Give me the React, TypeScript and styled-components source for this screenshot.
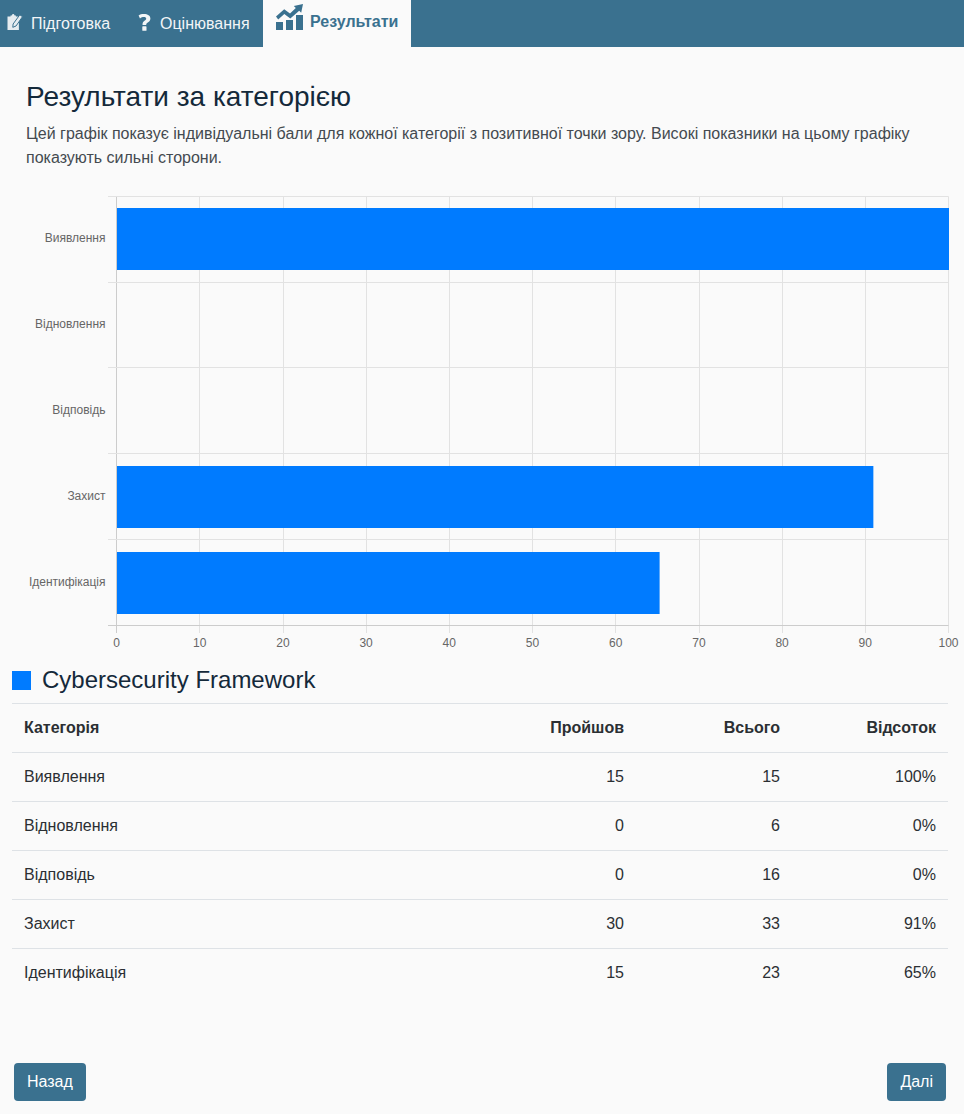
import React from 'react'
import styled, { createGlobalStyle } from 'styled-components'

const GlobalStyle = createGlobalStyle`
  html, body {
    margin: 0;
    padding: 0;
    background: #fafafa;
  }
  body {
    font-family: "Liberation Sans", Arial, sans-serif;
    font-size: 16px;
    color: #212529;
  }
`

const Page = styled.div`
  width: 964px;
  height: 1114px;
  display: flex;
  flex-direction: column;
  overflow: hidden;
`

const TabBar = styled.nav`
  height: 47px;
  display: flex;
  background: #3a718f;
`

const Tab = styled.div<{ $active?: boolean; $width: number; $gap: number }>`
  width: ${p => p.$width}px;
  display: flex;
  align-items: flex-start;
  gap: ${p => p.$gap}px;
  padding: ${p => (p.$active ? '4px 0 0 13px' : '14px 0 0 13px')};
  box-sizing: border-box;
  background: ${p => (p.$active ? '#fafafa' : 'transparent')};
  color: ${p => (p.$active ? '#3a718f' : '#f2f5f7')};
  font-weight: ${p => (p.$active ? 700 : 400)};
  font-size: 16px;
  white-space: nowrap;

  &:first-child {
    padding-left: 7px;
  }
`

const TabLabel = styled.span<{ $active?: boolean }>`
  margin-top: ${p => (p.$active ? 9 : 1)}px;
`

const Intro = styled.div`
  padding: 33px 12px 0 26px;
`

const Title = styled.h3`
  margin: 0 0 8px;
  font-size: 28px;
  line-height: 34px;
  font-weight: 400;
  color: #14293a;
`

const Lead = styled.p`
  margin: 0;
  font-size: 16px;
  line-height: 24px;
  color: #444a50;
`

const ChartSvg = styled.svg`
  display: block;
  margin-top: 26px;
  flex: none;
`

const TableSection = styled.section`
  margin: 0 16px 0 12px;
`

const LegendRow = styled.div`
  height: 34px;
  margin-bottom: 6px;
  display: flex;
  align-items: center;
  gap: 11px;
  font-size: 24px;
  color: #14293a;
`

const LegendSwatch = styled.span`
  width: 19px;
  height: 19px;
  background: #007bff;
`

const Table = styled.table`
  width: 100%;
  border-collapse: collapse;
  table-layout: fixed;
`

const Cell = styled.td<{ $right?: boolean; $head?: boolean; $width?: number }>`
  box-sizing: border-box;
  height: 49px;
  padding: 0 12px;
  border-top: 1px solid #dee2e6;
  text-align: ${p => (p.$right ? 'right' : 'left')};
  font-weight: ${p => (p.$head ? 700 : 400)};
  width: ${p => (p.$width ? `${p.$width}px` : 'auto')};
  color: #2b2f33;
`

const Footer = styled.footer`
  margin-top: 65px;
  padding: 0 18px 0 14px;
  display: flex;
  justify-content: space-between;
`

const NavButton = styled.button`
  height: 38px;
  padding: 0 13px;
  border: none;
  border-radius: 4px;
  background: #3a718f;
  color: #fff;
  font-family: inherit;
  font-size: 16px;
`

const rows = [
  { name: 'Виявлення', passed: 15, total: 15 },
  { name: 'Відновлення', passed: 0, total: 6 },
  { name: 'Відповідь', passed: 0, total: 16 },
  { name: 'Захист', passed: 30, total: 33 },
  { name: 'Ідентифікація', passed: 15, total: 23 },
]

const EditIcon = () => (
  <svg width="16" height="16" viewBox="0 0 16 16">
    <path
      fill="#e6ecf0"
      d="M0.5 2.5h3V1.5h1.200C5 .6 5.500 0 6.200 0s1.200.6 1.500 1.500h1.200v1h3v13.500H.5z"
    />
    <path
      fill="#e6ecf0"
      stroke="#3a718f"
      strokeWidth="1"
      d="M12.800 .8l2.700 1.900-6.500 9.300-3.200 1.300.3-3.300z"
    />
  </svg>
)

const QuestionIcon = () => (
  <svg width="13" height="17" viewBox="0 0 13 17" fill="#f2f5f7">
    <path d="M.6 1.400C2 .5 3.800 0 6 0c3.700 0 6.400 1.700 6.400 4.500 0 2-1.100 3-2.600 4-1.100.8-1.600 1.200-1.600 2.400H4.500c0-2.200.7-3.100 2-4.100 1.100-.8 1.700-1.300 1.700-2.100 0-1-.9-1.600-2.200-1.600-1.400 0-2.800.5-4 1.400z" />
    <rect x="4.300" y="12.300" width="4.200" height="4.500" rx="0.6" />
  </svg>
)

const ChartIcon = () => (
  <svg width="27" height="26" viewBox="0 0 27 26" fill="#3a718f">
    <rect x="0" y="18" width="7" height="8" />
    <rect x="10" y="16" width="7" height="10" />
    <rect x="20" y="11" width="7" height="15" />
    <path d="M0 12.600L8.200 5.300 14 9.500l5.800-5.500-2-1.900L27 0l-1.800 8.700-2-2L14.300 14.500 8.300 10.100 2.200 15.400z" />
  </svg>
)

const PLOT_LEFT = 116.25
const UNIT = 8.32
const PLOT_RIGHT = 948.5
const PLOT_TOP = 0.5
const BAR_H = 62

// Pixel rows of the horizontal grid lines, inside the chart
const gridRows = [0, 86, 171, 257, 343, 429]
const barTops = [12, 98, 184, 270, 356]
const ticks = Array.from({ length: 11 }, (_, i) => i * 10)

function BarChart() {
  return (
    <ChartSvg width={964} height={467} viewBox="0 0 964 467">
      {ticks.map(t => {
        const x = Math.round(PLOT_LEFT + t * UNIT) + 0.5
        return (
          <g key={t}>
            <line x1={x} x2={x} y1={PLOT_TOP} y2={437} stroke={t === 0 ? '#cccccc' : '#e2e2e2'} />
            <text x={116.5 + t * UNIT} y={451} textAnchor="middle" fontSize={12} fill="#666">
              {t}
            </text>
          </g>
        )
      })}
      {gridRows.map((y, i) => (
        <line key={y} x1={108} x2={PLOT_RIGHT} y1={y + 0.5} y2={y + 0.5} stroke={i === 5 ? '#cccccc' : '#e2e2e2'} />
      ))}
      {rows.map((r, i) => (
        <g key={r.name}>
          {r.passed > 0 && (
            <rect x={117} y={barTops[i]} width={(r.passed / r.total) * 100 * UNIT} height={BAR_H} fill="#007bff" />
          )}
          <text x={105.5} y={barTops[i] + 34} textAnchor="end" fontSize={12} fill="#666">
            {r.name}
          </text>
        </g>
      ))}
    </ChartSvg>
  )
}

export default function App() {
  return (
    <Page>
      <GlobalStyle />
      <TabBar>
        <Tab $width={125} $gap={8}>
          <EditIcon />
          <TabLabel>Підготовка</TabLabel>
        </Tab>
        <Tab $width={138} $gap={9}>
          <QuestionIcon />
          <TabLabel>Оцінювання</TabLabel>
        </Tab>
        <Tab $active $width={148} $gap={7}>
          <ChartIcon />
          <TabLabel $active>Результати</TabLabel>
        </Tab>
      </TabBar>
      <Intro>
        <Title>Результати за категорією</Title>
        <Lead>
          Цей графік показує індивідуальні бали для кожної категорії з позитивної точки зору. Високі показники на цьому графіку
          показують сильні сторони.
        </Lead>
      </Intro>
      <BarChart />
      <TableSection>
        <LegendRow>
          <LegendSwatch />
          Cybersecurity Framework
        </LegendRow>
        <Table>
          <thead>
            <tr>
              <Cell as="th" $head>Категорія</Cell>
              <Cell as="th" $head $right $width={156}>Пройшов</Cell>
              <Cell as="th" $head $right $width={156}>Всього</Cell>
              <Cell as="th" $head $right $width={156}>Відсоток</Cell>
            </tr>
          </thead>
          <tbody>
            {rows.map(r => (
              <tr key={r.name}>
                <Cell>{r.name}</Cell>
                <Cell $right>{r.passed}</Cell>
                <Cell $right>{r.total}</Cell>
                <Cell $right>{Math.round((r.passed / r.total) * 100)}%</Cell>
              </tr>
            ))}
          </tbody>
        </Table>
      </TableSection>
      <Footer>
        <NavButton>Назад</NavButton>
        <NavButton>Далі</NavButton>
      </Footer>
    </Page>
  )
}
